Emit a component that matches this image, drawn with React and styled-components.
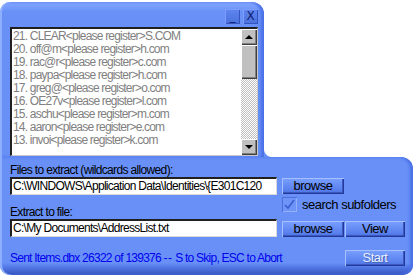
import styled, { createGlobalStyle } from 'styled-components'

const Global = createGlobalStyle`
  html, body {
    margin: 0;
    background: #fff;
  }
  body {
    font-family: "Liberation Sans", Arial, sans-serif;
    letter-spacing: -0.7px;
  }
`

const BLUE = '#6890f6'

// Fenêtre à forme libre (skin)
const Window = styled.div`
  display: flex;
  flex-direction: column;
  padding-top: 2px;
  width: 414px;
`

const TopPanel = styled.div`
  position: relative;
  width: 264px;
  height: 155px;
  background: linear-gradient(to bottom, #86a8ff 0px, ${BLUE} 10px, ${BLUE} 100%);
  border-radius: 10px 12px 0 0;
  box-shadow: inset 2px 0 0 #8eaeff, inset -3px 0 3px #4a70e6;
  display: flex;
  flex-direction: column;
`

const TitleRow = styled.div`
  height: 25px;
  display: flex;
  justify-content: flex-end;
  align-items: flex-start;
  gap: 3px;
  padding: 7px 6px 0 0;
  box-sizing: border-box;
`

const TitleButton = styled.div`
  width: 15px;
  height: 15px;
  background: linear-gradient(to bottom, #5f86f0, #4a70dc);
  box-shadow: inset 1px 1px 0 #7c9cff, inset -1px -1px 0 #3354c0;
  color: #102070;
  font-size: 12px;
  line-height: 15px;
  text-align: center;
  font-family: "DejaVu Sans", sans-serif;
  letter-spacing: 0;
`

const List = styled.div`
  margin-left: 10px;
  width: 248px;
  height: 129px;
  box-sizing: border-box;
  background: #fff;
  border-top: 2px solid #202020;
  border-left: 2px solid #202020;
  border-right: 1px solid #c8c8c8;
  border-bottom: 1px solid #c8c8c8;
  display: flex;
  position: relative;
  z-index: 1;
`

const Rows = styled.div`
  flex: 1;
  padding: 1px 0 0 1px;
  overflow: hidden;
`

const Row = styled.div`
  font-size: 12px;
  letter-spacing: -0.8px;
  line-height: 13px;
  height: 13px;
  color: #808080;
  white-space: nowrap;
`

const ScrollBar = styled.div`
  width: 16px;
  display: flex;
  flex-direction: column;
  background: repeating-conic-gradient(#c0c0c0 0 25%, #fff 0 50%) 0 0 / 2px 2px;
`

const ArrowButton = styled.div`
  height: 16px;
  background: #c0c0c0;
  box-shadow: inset 1px 1px 0 #fff, inset -1px -1px 0 #404040, inset -2px -2px 0 #808080;
  display: flex;
  align-items: center;
  justify-content: center;
`

const Thumb = styled.div`
  height: 34px;
  background: #c0c0c0;
  box-shadow: inset 1px 1px 0 #fff, inset -1px -1px 0 #404040, inset -2px -2px 0 #808080;
`

const Track = styled.div`
  flex: 1;
`

const Tri = styled.div`
  width: 0;
  height: 0;
  border-left: 4px solid transparent;
  border-right: 4px solid transparent;
  ${p => (p.$down ? 'border-top: 4px solid #000;' : 'border-bottom: 4px solid #000;')}
`

const BottomPanel = styled.div`
  position: relative;
  width: 413px;
  height: 118px;
  box-sizing: border-box;
  background: linear-gradient(to bottom, ${BLUE} 0, ${BLUE} 106px, #4f74e2 111px, #3552bc 118px);
  border-radius: 0 12px 10px 10px;
  box-shadow: inset 2px 0 0 #8eaeff, inset -3px 0 3px #4a70e6;
  padding: 6px 0 0 10px;
  display: flex;
  flex-direction: column;

  &::before {
    content: '';
    position: absolute;
    left: 264px;
    top: -8px;
    width: 8px;
    height: 8px;
    background: radial-gradient(circle at 100% 0, transparent 7.5px, ${BLUE} 8.5px);
  }
`

const Label = styled.div`
  font-size: 12px;
  letter-spacing: -0.65px;
  line-height: 14px;
  height: 14px;
  color: #000;
  margin-top: ${p => p.$mt || 0}px;
`

const Line = styled.div`
  display: flex;
  align-items: flex-start;
`

const Input = styled.div`
  width: 267px;
  height: 18px;
  box-sizing: border-box;
  background: #fff;
  border-top: 2px solid #202020;
  border-left: 2px solid #202020;
  border-right: 1px solid #d8d8d8;
  border-bottom: 1px solid #d8d8d8;
  font-size: 12px;
  letter-spacing: -0.7px;
  line-height: 15px;
  padding-left: 1px;
  white-space: nowrap;
  overflow: hidden;
  color: #000;
`

const Button = styled.div`
  width: ${p => p.$w || 62}px;
  height: 16px;
  margin-left: ${p => p.$ml || 0}px;
  margin-top: ${p => p.$mt || 0}px;
  box-sizing: border-box;
  background: linear-gradient(to bottom, #7aa0ff, #5b82ee 70%, #4a6fdc);
  box-shadow: inset 1px 1px 0 #a6c0ff, inset -1px -1px 0 #22399a, inset -2px -2px 0 #3a58c0;
  font-size: 13px;
  letter-spacing: -0.5px;
  line-height: 15px;
  text-align: center;
  color: ${p => (p.$disabled ? '#e8eeff' : '#000')};
  text-shadow: ${p => (p.$disabled ? '1px 1px 0 #4a64b8' : 'none')};
`

const Side = styled.div`
  display: flex;
  flex-direction: column;
  margin-left: 5px;
`

const CheckRow = styled.div`
  display: flex;
  align-items: center;
  margin-top: 3px;
  font-size: 13px;
  letter-spacing: -0.5px;
  color: #000;
  gap: 5px;
`

const CheckBox = styled.div`
  width: 15px;
  height: 15px;
  background: #6e94f8;
  box-shadow: inset 1px 1px 0 #4c6fd8, inset -1px -1px 0 #92b0ff;
  display: flex;
  align-items: center;
  justify-content: center;
`

const StatusRow = styled.div`
  display: flex;
  align-items: center;
  margin-top: 13px;
`

const Status = styled.div`
  width: 335px;
  font-size: 12px;
  letter-spacing: -0.75px;
  color: #0000ee;
  white-space: nowrap;
`

const Dash = styled.span`
  letter-spacing: 0.5px;
`

const rows = [
  '21. CLEAR<please register>S.COM',
  '20. off@m<please register>h.com',
  '19. rac@r<please register>c.com',
  '18. paypa<please register>h.com',
  '17. greg@<please register>o.com',
  '16. OE27v<please register>l.com',
  '15. aschu<please register>m.com',
  '14. aaron<please register>e.com',
  '13. invoi<please register>k.com',
]

export default function App() {
  return (
    <>
      <Global />
      <Window>
        <TopPanel>
          <TitleRow>
            <TitleButton>_</TitleButton>
            <TitleButton>X</TitleButton>
          </TitleRow>
          <List>
            <Rows>
              {rows.map(r => (
                <Row key={r}>{r}</Row>
              ))}
            </Rows>
            <ScrollBar>
              <ArrowButton><Tri /></ArrowButton>
              <Thumb />
              <Track />
              <ArrowButton><Tri $down /></ArrowButton>
            </ScrollBar>
          </List>
        </TopPanel>
        <BottomPanel>
          <Label>Files to extract (wildcards allowed):</Label>
          <Line>
            <Input>C:\WINDOWS\Application Data\Identities\{'{'}E301C120</Input>
            <Side>
              <Button $mt={1}>browse</Button>
              <CheckRow>
                <CheckBox>
                  <svg width="13" height="13" viewBox="0 0 13 13">
                    <path d="M2 7 L5 10 L11 2" fill="none" stroke="#3a5ccc" strokeWidth="1.6" />
                  </svg>
                </CheckBox>
                search subfolders
              </CheckRow>
            </Side>
          </Line>
          <Label $mt={-7}>Extract to file:</Label>
          <Line>
            <Input>C:\My Documents\AddressList.txt</Input>
            <Button $ml={5} $mt={2}>browse</Button>
            <Button $ml={1} $w={60} $mt={2}>View</Button>
          </Line>
          <StatusRow>
            <Status>
              Sent Items.dbx 26322 of 139376 <Dash>--</Dash> S to Skip, ESC to Abort
            </Status>
            <Button $w={60} $disabled>Start</Button>
          </StatusRow>
        </BottomPanel>
      </Window>
    </>
  )
}
